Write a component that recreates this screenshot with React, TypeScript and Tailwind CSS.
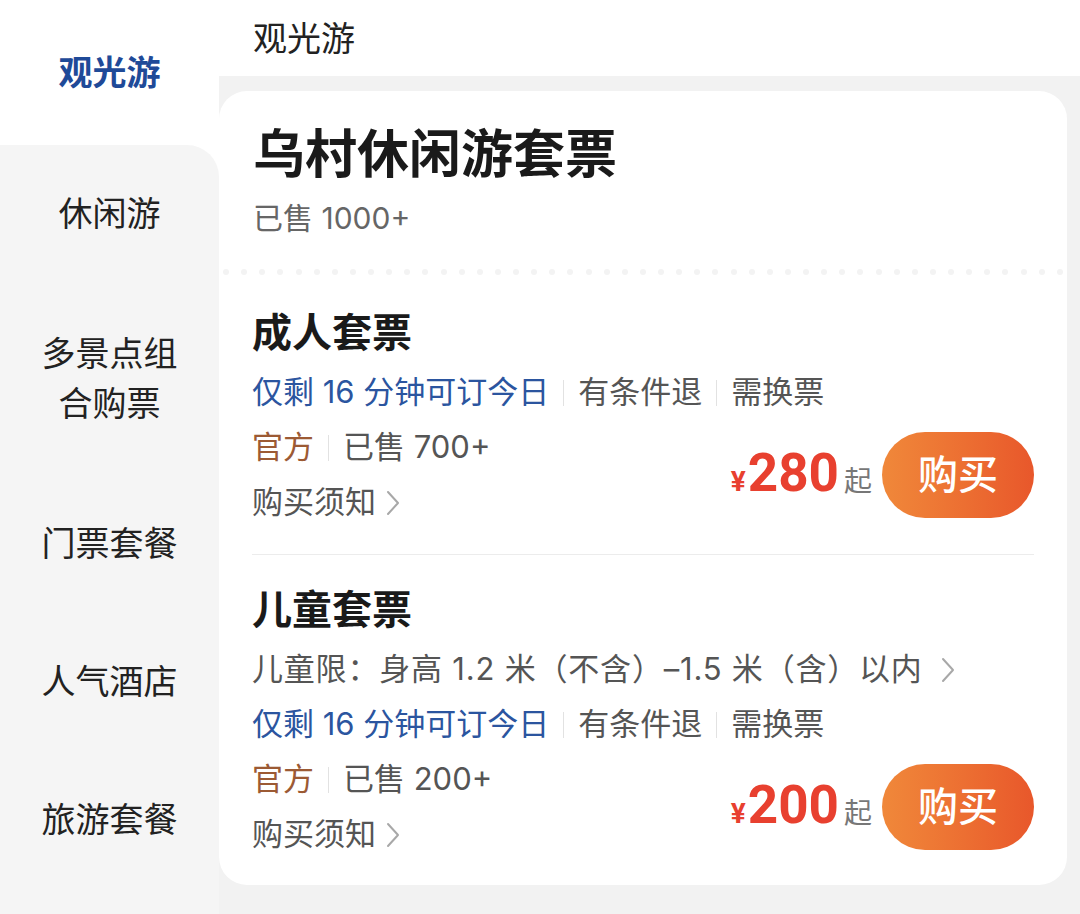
const font = "font-['Inter','Noto_Sans_CJK_SC',sans-serif]";

const sideItems = [
  { label: '休闲游', h: 'h-[138px]' },
  { label: '多景点组合购票', h: 'h-[192px]' },
  { label: '门票套餐', h: 'h-[138px]' },
  { label: '人气酒店', h: 'h-[138px]' },
  { label: '旅游套餐', h: 'h-[138px]' },
];

function Sep() {
  return <span className="mx-[14px] h-[26px] w-px bg-[#e2e2e2]" />;
}

function Chevron({ gap = 'ml-[10px]' }: { gap?: string }) {
  return (
    <svg width="14" height="26" viewBox="0 0 14 26" className={gap}>
      <path d="M2 2 L12 13 L2 24" stroke="#a8a8a8" strokeWidth="2" fill="none" strokeLinecap="round" strokeLinejoin="round" />
    </svg>
  );
}

function Tags() {
  return (
    <div className="flex h-[55px] items-center text-[31px]">
      <span className="text-[#2b559f]">仅剩 16 分钟可订今日</span>
      <Sep />
      <span className="text-[#555]">有条件退</span>
      <Sep />
      <span className="text-[#555]">需换票</span>
    </div>
  );
}

function Ticket({ title, sold, price, note, last }: { title: string; sold: string; price: string; note?: string; last?: boolean }) {
  return (
    <div className={`mx-[33px] ${last ? 'pb-[23px] pt-[29px]' : 'border-b border-[#ececec] pb-[24px] pt-[4px]'}`}>
      <h2 className="text-[40px] font-bold leading-[52px] text-[#1a1a1a]">{title}</h2>
      <div className="mt-[6px]">
        {note && (
          <div className="flex h-[55px] items-center text-[31px] text-[#555]">
            <span className="tracking-[0.8px]">{note}</span>
            <Chevron gap="ml-[18px]" />
          </div>
        )}
        <Tags />
        <div className="flex items-center justify-between">
          <div>
            <div className="flex h-[55px] items-center text-[31px]">
              <span className="text-[#9c5a34]">官方</span>
              <Sep />
              <span className="text-[#555]">{sold}</span>
            </div>
            <div className="flex h-[55px] items-center text-[31px] text-[#555]">
              购买须知
              <Chevron />
            </div>
          </div>
          <div className="flex items-center">
            <div className="flex items-baseline">
              <span className="font-['Roboto'] text-[28px] font-bold text-[#e8402f]">¥</span>
              <span className="ml-[2px] font-['Roboto'] text-[53px] font-bold leading-none text-[#e8402f]">{price}</span>
              <span className="ml-[5px] text-[28px] text-[#777]">起</span>
            </div>
            <button className="ml-[10px] h-[86px] w-[152px] rounded-full bg-gradient-to-r from-[#f0883a] to-[#e8572b] text-[40px] font-medium text-white">
              购买
            </button>
          </div>
        </div>
      </div>
    </div>
  );
}

export default function App() {
  return (
    <div className={`flex h-[914px] w-[1080px] bg-white ${font}`}>
      <aside className="flex w-[219px] flex-col">
        <div className="flex h-[145px] items-center justify-center text-[34px] font-bold text-[#1f4a98]">观光游</div>
        <div className="flex-1 rounded-tr-[32px] bg-[#f5f5f5]">
          {sideItems.map(it => (
            <div key={it.label} className={`flex ${it.h} items-center justify-center`}>
              <span className="w-[140px] text-center text-[34px] leading-[50px] text-[#222]">{it.label}</span>
            </div>
          ))}
        </div>
      </aside>

      <main className="flex flex-1 flex-col">
        <header className="flex h-[76px] items-center pl-[34px] text-[34px] text-[#222]">观光游</header>
        <div className="flex-1 bg-[#f2f2f2] pr-[13px] pt-[15px]">
          <div className="rounded-[28px] bg-white">
            <div className="px-[34px] pt-[32px]">
              <h1 className="text-[52px] font-bold leading-[64px] text-[#1a1a1a]">乌村休闲游套票</h1>
              <p className="mt-[8px] text-[30px] leading-[46px] text-[#666]">已售 1000+</p>
            </div>
            <div className="flex h-[62px] items-center justify-between px-[4px]">
              {Array.from({ length: 47 }).map((_, i) => (
                <span key={i} className="h-[6px] w-[6px] rounded-full bg-[#f3f3f3]" />
              ))}
            </div>
            <Ticket title="成人套票" sold="已售 700+" price="280" />
            <Ticket
              title="儿童套票"
              sold="已售 200+"
              price="200"
              note="儿童限：身高 1.2 米（不含）–1.5 米（含）以内"
              last
            />
          </div>
        </div>
      </main>
    </div>
  );
}
